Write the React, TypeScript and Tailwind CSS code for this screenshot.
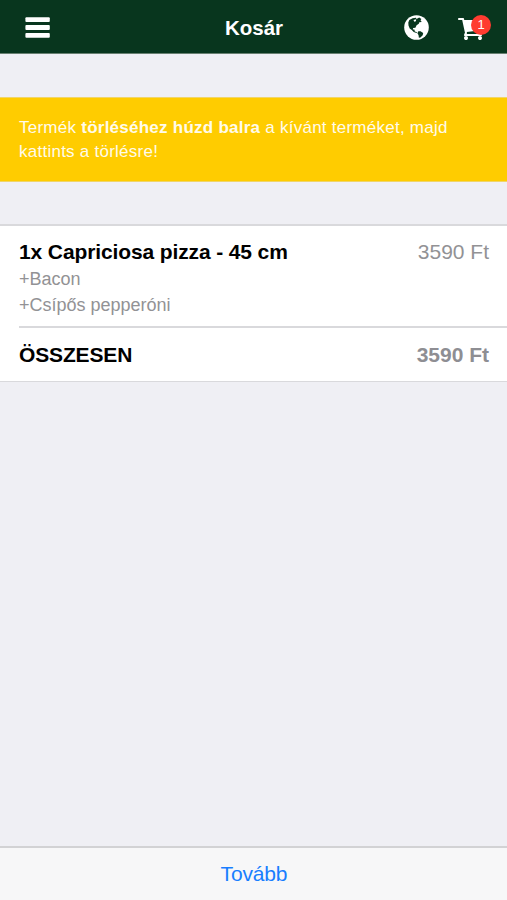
const extras = ["+Bacon", "+Csípős pepperóni"];

function MenuIcon() {
  return (
    <svg className="mt-[2px] ml-[25px] h-[21px] w-[25px]" viewBox="0 0 25 21" fill="currentColor">
      <rect x="0.4" y="0.2" width="24.4" height="4.8" rx="1" />
      <rect x="0.4" y="8.1" width="24.4" height="4.8" rx="1" />
      <rect x="0.4" y="16" width="24.4" height="4.8" rx="1" />
    </svg>
  );
}

function EarthIcon() {
  return (
    <svg className="mt-[2px] size-[25px]" viewBox="0 0 25 25">
      <circle cx="12.5" cy="12.5" r="12.3" fill="white" />
      <path fill="#08361e" d="M5.3 5 8.6 3.2l3.2-.4.8 1.1 2.6-1.5 2.2 1.7-.9 1.1 1.2 1.7-2.4.3-.5 1.6-2.2 1.5-1.2 2.4-2.3.2-.3 1.5 1.6.2.4 1.8 2.3.8-.6.7-2.8-1-1.9-1.8-2.1-1.6-1.2-3-.2-3.1zM14.3 16.2l2.2.1 2.7 1.7-.5 2.2-2.2 2.2-1.6.3-.4-2.7-1.1-1.8z" />
      <path fill="white" d="m9.5 5.1 2.7-.8-.3 2-1.6.5z" />
    </svg>
  );
}

function CartIcon() {
  return (
    <svg className="size-[28px]" viewBox="0 0 1792 1792" fill="currentColor">
      <path d="M640 1536q0 52-38 90t-90 38-90-38-38-90 38-90 90-38 90 38 38 90zm896 0q0 52-38 90t-90 38-90-38-38-90 38-90 90-38 90 38 38 90zm128-1088v512q0 24-16.5 42.5t-40.5 21.5l-1044 122q13 60 13 70 0 16-24 64h920q26 0 45 19t19 45-19 45-45 19h-1024q-26 0-45-19t-19-45q0-11 8-31.5t16-36 21.5-40 15.5-29.5l-177-823h-204q-26 0-45-19t-19-45 19-45 45-19h256q16 0 28.5 6.5t19.5 15.5 13 24.5 8 26 5.5 29.5 4.5 26h1201q26 0 45 19t19 45z" />
    </svg>
  );
}

export default function App() {
  return (
    <div className="flex h-[900px] w-full flex-col bg-[#efeff4] font-['Liberation_Sans',Arial,sans-serif] text-black">
      <header className="grid h-[54px] shrink-0 grid-cols-3 items-center border-b border-[#688071] bg-[#08361e] text-white">
        <MenuIcon />
        <h1 className="mt-[3px] pl-px text-center text-[20.5px] font-bold">Kosár</h1>
        <div className="flex items-center justify-end pr-[21px]">
          <EarthIcon />
          <div className="relative mt-[3px] ml-[29px]">
            <CartIcon />
            <span className="absolute top-[1px] left-[13px] flex size-5 items-center justify-center rounded-full bg-[#ff3b30] text-[13px]">1</span>
          </div>
        </div>
      </header>
      <p className="mt-[43px] h-[85px] shrink-0 border-y border-[#f0d568] bg-[#ffcc00] px-[19px] pt-[18px] text-[17px] leading-6 tracking-[0.25px] text-[#fffbea]">
        Termék <b>törléséhez húzd balra</b> a kívánt terméket, majd<br />kattints a törlésre!
      </p>
      <section className="mt-[42px] flex h-[158px] shrink-0 flex-col border-t-2 border-b border-[#d9d9dc] bg-white pl-[19px]">
        <div className="flex h-[102px] justify-between border-b-2 border-[#d9d9dc] pt-3 pr-[18px]">
          <div>
            <h2 className="text-[21px] leading-7 font-bold tracking-[-0.12px]">1x Capriciosa pizza - 45 cm</h2>
            {extras.map((e) => <p key={e} className="text-[18px] leading-[26px] text-[#929295]">{e}</p>)}
          </div>
          <span className="text-[21px] leading-7 text-[#929295]">3590 Ft</span>
        </div>
        <div className="flex flex-1 items-center justify-between pt-px pr-[18px] text-[21px] font-bold">
          <span className="tracking-[-0.15px]">ÖSSZESEN</span>
          <span className="text-[#8e8e93]">3590 Ft</span>
        </div>
      </section>
      <footer className="mt-auto flex h-[54px] items-center justify-center border-t-2 border-[#d2d2d4] bg-[#f7f7f8] pl-px text-[21px] tracking-[-0.15px] text-[#187eff]">Tovább</footer>
    </div>
  );
}
